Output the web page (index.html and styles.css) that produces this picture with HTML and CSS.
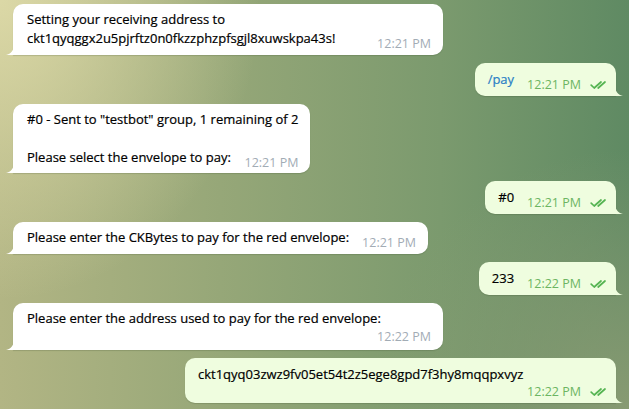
FILE: index.html
```html
<!DOCTYPE html>
<html>
<head>
<meta charset="utf-8">
<link rel="stylesheet" href="styles.css">
</head>
<body>
<div class="chat">
  <div class="bubble in wide row">
    <div class="text">Setting your receiving address to<br>ckt1qyqggx2u5pjrftz0n0fkzzphzpfsgjl8xuwskpa43s!</div>
    <div class="meta push"><span class="time">12:21 PM</span></div>
    <svg class="tail tail-in" viewBox="0 0 8 10"><path d="M8 0 C8 5 5 9 0 10 L8 10 Z"/></svg>
  </div>

  <div class="bubble out row">
    <div class="text link">/pay</div>
    <div class="meta"><span class="time">12:21 PM</span><svg class="checks" viewBox="0 0 18 8"><path d="M1.2 4.2 L4.2 7 L11 1 M8.2 7 L15 1"/></svg></div>
    <svg class="tail tail-out" viewBox="0 0 8 10"><path d="M0 0 C0 5 3 9 8 10 L0 10 Z"/></svg>
  </div>

  <div class="bubble in col">
    <div class="text">#0 - Sent to "testbot" group, 1 remaining of 2<br><br>Please select the envelope to pay:</div>
    <div class="meta overlap"><span class="time">12:21 PM</span></div>
    <svg class="tail tail-in" viewBox="0 0 8 10"><path d="M8 0 C8 5 5 9 0 10 L8 10 Z"/></svg>
  </div>

  <div class="bubble out row">
    <div class="text">#0</div>
    <div class="meta"><span class="time">12:21 PM</span><svg class="checks" viewBox="0 0 18 8"><path d="M1.2 4.2 L4.2 7 L11 1 M8.2 7 L15 1"/></svg></div>
    <svg class="tail tail-out" viewBox="0 0 8 10"><path d="M0 0 C0 5 3 9 8 10 L0 10 Z"/></svg>
  </div>

  <div class="bubble in row">
    <div class="text">Please enter the CKBytes to pay for the red envelope:</div>
    <div class="meta"><span class="time">12:21 PM</span></div>
    <svg class="tail tail-in" viewBox="0 0 8 10"><path d="M8 0 C8 5 5 9 0 10 L8 10 Z"/></svg>
  </div>

  <div class="bubble out row">
    <div class="text">233</div>
    <div class="meta"><span class="time">12:22 PM</span><svg class="checks" viewBox="0 0 18 8"><path d="M1.2 4.2 L4.2 7 L11 1 M8.2 7 L15 1"/></svg></div>
    <svg class="tail tail-out" viewBox="0 0 8 10"><path d="M0 0 C0 5 3 9 8 10 L0 10 Z"/></svg>
  </div>

  <div class="bubble in wide col">
    <div class="text">Please enter the address used to pay for the red envelope:</div>
    <div class="meta"><span class="time">12:22 PM</span></div>
    <svg class="tail tail-in" viewBox="0 0 8 10"><path d="M8 0 C8 5 5 9 0 10 L8 10 Z"/></svg>
  </div>

  <div class="bubble out wide col">
    <div class="text">ckt1qyq03zwz9fv05et54t2z5ege8gpd7f3hy8mqqpxvyz</div>
    <div class="meta"><span class="time">12:22 PM</span><svg class="checks" viewBox="0 0 18 8"><path d="M1.2 4.2 L4.2 7 L11 1 M8.2 7 L15 1"/></svg></div>
    <svg class="tail tail-out" viewBox="0 0 8 10"><path d="M0 0 C0 5 3 9 8 10 L0 10 Z"/></svg>
  </div>
</div>
</body>
</html>
```

FILE: styles.css
```css
html, body {
  margin: 0;
  padding: 0;
  height: 100%;
}

body {
  width: 629px;
  height: 409px;
  overflow: hidden;
  font-family: "Open Sans", "Noto Sans", "DejaVu Sans", sans-serif;
  font-size: 13px;
  color: #000;
  background:
    radial-gradient(ellipse 260px 300px at 0 0, rgba(224, 220, 170, 0.9) 0, rgba(224, 220, 170, 0) 100%),
    radial-gradient(circle at 100% 100%, rgba(140, 156, 116, 0.9) 0, rgba(140, 156, 116, 0) 260px),
    linear-gradient(90deg, #b2b584 0%, #96a778 35%, #7b9a6e 70%, #5f8a63 100%);
}

.chat {
  display: flex;
  flex-direction: column;
  gap: 8px;
  padding: 4px 13px 0 13px;
}

.bubble {
  position: relative;
  box-sizing: border-box;
  border-radius: 10px;
  line-height: 19px;
  box-shadow: 0 1px 1px rgba(40, 60, 30, 0.18);
}

.bubble.in {
  align-self: flex-start;
  background: #ffffff;
  border-bottom-left-radius: 0;
  padding: 6px 12px 7px 14px;
}

.bubble.in.col.wide {
  padding-bottom: 6px;
}

.bubble.out {
  align-self: flex-end;
  background: #effddf;
  border-bottom-right-radius: 0;
  padding: 7px 8px 7px 13px;
}

.bubble.out.col {
  padding-bottom: 4px;
}

.bubble.wide {
  width: 430px;
}

.bubble.out.wide {
  width: 431px;
}

.row {
  display: flex;
  align-items: flex-end;
}

.col {
  display: flex;
  flex-direction: column;
}

.text {
  white-space: nowrap;
  -webkit-text-stroke: 0.2px currentColor;
}

.link {
  color: #2a80c5;
}

.meta {
  display: flex;
  align-items: center;
  gap: 9px;
  margin-left: 13px;
  margin-bottom: -3px;
  font-size: 12.5px;
  line-height: 14px;
  height: 14px;
}

.meta.push {
  margin-left: auto;
}

.col .meta {
  align-self: flex-end;
  margin-top: 2px;
  margin-bottom: 0;
}

.out.col .meta {
  margin-top: 1px;
}

.col .meta.overlap {
  margin-top: -11px;
  margin-bottom: -4px;
}

.in .time {
  color: #a2acb5;
}

.out .time {
  color: #6cb562;
}

.checks {
  width: 18px;
  height: 8px;
  fill: none;
  stroke: #55b452;
  stroke-width: 1.7;
  stroke-linecap: round;
  stroke-linejoin: round;
}

.tail {
  position: absolute;
  bottom: 0;
  width: 8px;
  height: 10px;
}

.tail-in {
  left: -7px;
  fill: #ffffff;
}

.tail-out {
  right: -7px;
  fill: #effddf;
}
```
